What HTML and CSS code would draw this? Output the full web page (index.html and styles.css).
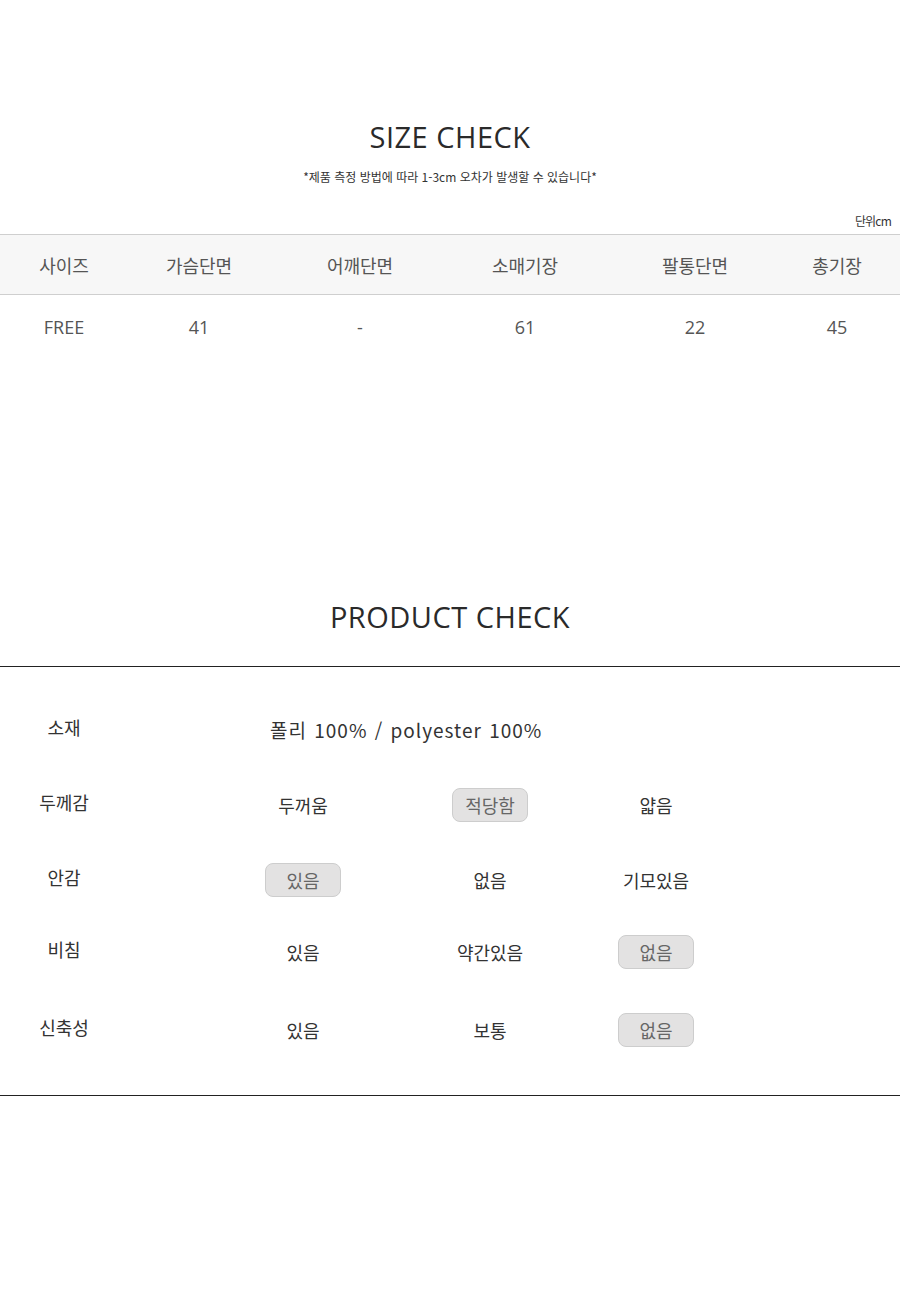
FILE: index.html
```html
<!DOCTYPE html>
<html lang="ko">
<head>
<meta charset="utf-8">
<link rel="stylesheet" href="styles.css">
</head>
<body>
<section class="size">
  <h2 class="title">SIZE CHECK</h2>
  <p class="note">*제품 측정 방법에 따라 1-3cm 오차가 발생할 수 있습니다*</p>
  <p class="unit">단위cm</p>
  <div class="size-table">
    <div class="row head">
      <span>사이즈</span><span>가슴단면</span><span>어깨단면</span><span>소매기장</span><span>팔통단면</span><span>총기장</span>
    </div>
    <div class="row body">
      <span>FREE</span><span>41</span><span>-</span><span>61</span><span>22</span><span>45</span>
    </div>
  </div>
</section>

<section class="product">
  <h2 class="title">PRODUCT CHECK</h2>
  <div class="check">
    <div class="crow">
      <span class="label">소재</span>
      <span class="material">폴리 100% / polyester 100%</span>
    </div>
    <div class="crow">
      <span class="label">두께감</span>
      <span class="opt">두꺼움</span>
      <span class="opt"><em class="pill">적당함</em></span>
      <span class="opt">얇음</span>
    </div>
    <div class="crow">
      <span class="label">안감</span>
      <span class="opt"><em class="pill">있음</em></span>
      <span class="opt">없음</span>
      <span class="opt">기모있음</span>
    </div>
    <div class="crow short">
      <span class="label">비침</span>
      <span class="opt">있음</span>
      <span class="opt">약간있음</span>
      <span class="opt"><em class="pill">없음</em></span>
    </div>
    <div class="crow tall">
      <span class="label">신축성</span>
      <span class="opt">있음</span>
      <span class="opt">보통</span>
      <span class="opt"><em class="pill">없음</em></span>
    </div>
  </div>
</section>
</body>
</html>
```

FILE: styles.css
```css
* { box-sizing: border-box; }
html, body { margin: 0; padding: 0; background: #fff; }
body {
  width: 900px;
  font-family: "Noto Sans CJK KR", "Open Sans", sans-serif;
  color: #333;
}
.title {
  margin: 0;
  font-family: "Open Sans", "Noto Sans CJK KR", sans-serif;
  font-weight: 400;
  font-size: 29px;
  line-height: 40px;
  text-align: center;
  color: #2a2a2a;
  letter-spacing: 0.5px;
}
.size { padding-top: 117px; }
.note {
  margin: 12px 0 0;
  font-size: 12px;
  line-height: 16px;
  text-align: center;
  color: #333;
  letter-spacing: 0;
}
.unit {
  margin: 28px 0 0;
  padding-right: 9px;
  font-size: 12px;
  line-height: 16px;
  text-align: right;
  color: #333;
  letter-spacing: -0.8px;
}
.size-table { margin-top: 5px; }
.row {
  display: grid;
  grid-template-columns: 128px 142px 180px 150px 190px 94px;
  align-items: center;
}
.row span { text-align: center; }
.head {
  height: 61px;
  background: #f7f7f7;
  border-top: 1px solid #cfcfcf;
  border-bottom: 1px solid #cfcfcf;
  font-size: 18px;
  color: #555;
}
.body {
  height: 64px;
  font-family: "Open Sans", "Noto Sans CJK KR", sans-serif;
  font-size: 18px;
  color: #555;
}
.product { padding-top: 238px; }
.check {
  margin-top: 29px;
  border-top: 1px solid #222;
  border-bottom: 1px solid #222;
  padding: 25px 0 28px;
}
.crow {
  display: grid;
  grid-template-columns: 228px 150px 224px 108px;
  height: 75px;
  align-items: center;
  font-size: 18px;
  color: #333;
}
.crow.short { height: 69px; }
.crow.tall { height: 81px; padding-top: 6px; }
.label { width: 128px; text-align: center; margin-top: -6px; }
.opt { text-align: center; }
.material {
  grid-column: 2 / 5;
  padding-left: 42px;
  font-size: 19px;
  color: #333;
  letter-spacing: 1px;
  word-spacing: 1px;
}
.pill {
  display: inline-block;
  font-style: normal;
  width: 76px;
  height: 34px;
  line-height: 32px;
  border: 1px solid #cdcdcd;
  border-radius: 8px;
  background: #e3e2e2;
  color: #666;
  text-align: center;
}
```
